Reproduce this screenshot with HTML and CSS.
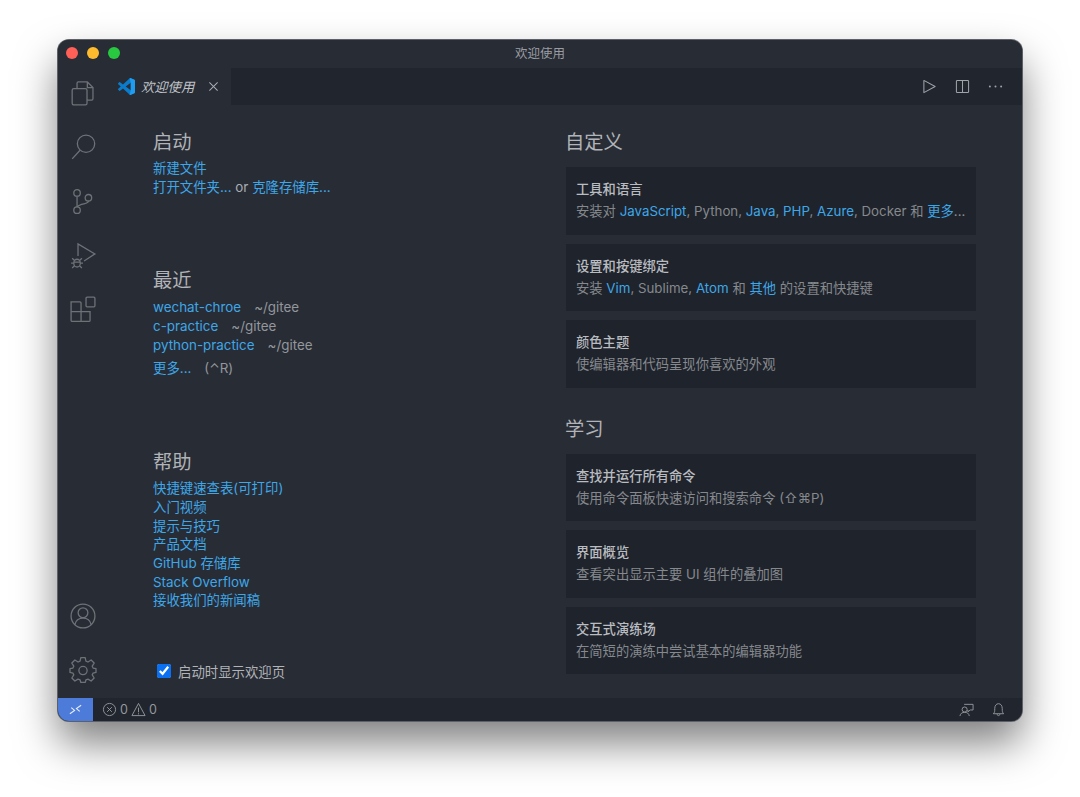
FILE: index.html
```html
<!DOCTYPE html>
<html lang="zh-CN">
<head>
    <meta charset="UTF-8">
    <meta name="viewport" content="width=device-width, initial-scale=1.0">
    <title>欢迎使用</title>
    <link rel="stylesheet" href="styles.css">
</head>
<body>
    <div class="window">
        <div class="titlebar">
            <div class="lights">
                <span class="light red"></span>
                <span class="light yellow"></span>
                <span class="light green"></span>
            </div>
            <div class="window-title">欢迎使用</div>
        </div>
        <div class="main">
            <div class="activitybar">
                <div class="activity-top">
                    <svg class="activity-icon" viewBox="0 0 24 24" fill="none" stroke="currentColor" stroke-width="1.2">
                        <path d="M6.500 8V3A1.200 1.200 0 0 1 7.700 1.800H16L21.200 7V17.300A1.200 1.200 0 0 1 20 18.500H15.700"/>
                        <path d="M16 1.800V7H21.200"/>
                        <rect x="2" y="8" width="13.700" height="15" rx="1.500"/>
                    </svg>
                    <svg class="activity-icon" viewBox="0 0 24 24" fill="none" stroke="currentColor" stroke-width="1.2">
                        <circle cx="14.800" cy="9" r="8"/>
                        <path d="M9.300 15L2 23"/>
                    </svg>
                    <svg class="activity-icon" viewBox="0 0 24 24" fill="none" stroke="currentColor" stroke-width="1.2">
                        <circle cx="6.500" cy="4.500" r="3"/>
                        <circle cx="6.500" cy="20.500" r="3"/>
                        <circle cx="17" cy="9" r="3"/>
                        <path d="M6.500 7.500V17.500"/>
                        <path d="M17 12C17 15.500 9.500 13.500 6.500 17.500"/>
                    </svg>
                    <svg class="activity-icon" viewBox="0 0 24 24" fill="none" stroke="currentColor" stroke-width="1.2">
                        <path d="M7.400 13V1.800L23 11L13 17.500"/>
                        <ellipse cx="6.500" cy="19.500" rx="3" ry="3.600"/>
                        <path d="M3.500 18.500H9.500M2 15L4.200 17M11 15L8.800 17M1 19.500H3.500M9.500 19.500H12M2 24L4.200 22M11 24L8.800 22"/>
                    </svg>
                    <svg class="activity-icon" viewBox="0 0 24 24" fill="none" stroke="currentColor" stroke-width="1.2">
                        <rect x="14.800" y="1" width="8.200" height="9" rx="1"/>
                        <path d="M1 5.500H9.200A1 1 0 0 1 10.200 6.500V23.500H2A1 1 0 0 1 1 22.500Z"/>
                        <path d="M1 14.500H18.500V22.500A1 1 0 0 1 17.500 23.500H10.200"/>
                    </svg>
                </div>
                <div class="activity-bottom">
                    <svg class="activity-icon" viewBox="0 0 24 24" fill="none" stroke="currentColor" stroke-width="1.2">
                        <circle cx="12" cy="12" r="11"/>
                        <circle cx="12" cy="9" r="4.500"/>
                        <path d="M4.500 20C5.500 15.500 8.500 14 12 14S18.500 15.500 19.500 20"/>
                    </svg>
                    <svg class="activity-icon" viewBox="0 0 24 24" fill="none" stroke="currentColor" stroke-width="1.2">
                        <path d="M10 .5H14L14.700 3.800L16.600 4.600L19.500 2.800L22.300 5.600L20.500 8.500L21.300 10.200L24 10.800V14.200L21.300 14.800L20.500 16.500L22.300 19.400L19.500 22.200L16.600 20.400L14.700 21.200L14 23.500H10L9.300 21.200L7.400 20.400L4.500 22.200L1.700 19.400L3.500 16.500L2.700 14.800L0 14.200V10.800L2.700 10.200L3.500 8.500L1.700 5.600L4.500 2.800L7.400 4.600L9.300 3.800Z" stroke-linejoin="round"/>
                        <circle cx="12" cy="12.500" r="3.800"/>
                    </svg>
                </div>
            </div>
            <div class="editor">
                <div class="tabbar">
                    <div class="tab">
                        <svg class="tab-logo" viewBox="0 0 24 24">
                            <path fill="#0b7ccc" d="M23.150 2.587L18.210.21a1.494 1.494 0 0 0-1.705.29l-9.460 8.630-4.120-3.128a.999.999 0 0 0-1.276.057L.327 7.261A1 1 0 0 0 .326 8.740L3.899 12 .326 15.260a1 1 0 0 0 .001 1.479L1.650 17.940a.999.999 0 0 0 1.276.057l4.120-3.128 9.460 8.630a1.492 1.492 0 0 0 1.704.29l4.942-2.377A1.500 1.500 0 0 0 24 20.060V3.939a1.500 1.500 0 0 0-.85-1.352zm-5.146 14.861L10.826 12l7.178-5.448v10.896z"/>
                            <path fill="#1f9cf0" d="M16.505.5a1.494 1.494 0 0 1 1.705-.29l4.940 2.377A1.500 1.500 0 0 1 24 3.939V20.060a1.500 1.500 0 0 1-.85 1.352l-4.942 2.377a1.492 1.492 0 0 1-1.704-.29L18.004 17.448V6.552z"/>
                        </svg>
                        <span class="tab-label">欢迎使用</span>
                        <svg class="tab-close" viewBox="0 0 12 12" fill="none" stroke="currentColor" stroke-width="1.1">
                            <path d="M1.500 1.500L10.500 10.500M10.500 1.500L1.500 10.500"/>
                        </svg>
                    </div>
                    <div class="tab-actions">
                        <svg class="action-icon" viewBox="0 0 16 16" fill="none" stroke="currentColor" stroke-width="1.1">
                            <path d="M2 1.500L14 8L2 14.500Z" stroke-linejoin="round"/>
                        </svg>
                        <svg class="action-icon" viewBox="0 0 16 16" fill="none" stroke="currentColor" stroke-width="1.1">
                            <rect x="1.500" y="1.500" width="13" height="13" rx="1"/>
                            <path d="M8 1.500V14.500"/>
                        </svg>
                        <svg class="action-icon" viewBox="0 0 16 16" fill="currentColor">
                            <circle cx="2" cy="8" r="1.050"/>
                            <circle cx="8" cy="8" r="1.050"/>
                            <circle cx="14" cy="8" r="1.050"/>
                        </svg>
                    </div>
                </div>
                <div class="welcome">
                    <div class="col-left">
                        <div class="section start-section">
                            <h2>启动</h2>
                            <div class="line"><a>新建文件</a></div>
                            <div class="line"><a>打开文件夹...</a> or <a>克隆存储库...</a></div>
                        </div>
                        <div class="section recent-section">
                            <h2>最近</h2>
                            <div class="line"><a>wechat-chroe</a><span class="path">~/gitee</span></div>
                            <div class="line"><a>c-practice</a><span class="path">~/gitee</span></div>
                            <div class="line"><a>python-practice</a><span class="path">~/gitee</span></div>
                            <div class="line more-line"><a>更多...</a><span class="path">(⌃R)</span></div>
                        </div>
                        <div class="section help-section">
                            <h2>帮助</h2>
                            <div class="line"><a>快捷键速查表(可打印)</a></div>
                            <div class="line"><a>入门视频</a></div>
                            <div class="line"><a>提示与技巧</a></div>
                            <div class="line"><a>产品文档</a></div>
                            <div class="line"><a>GitHub 存储库</a></div>
                            <div class="line"><a>Stack Overflow</a></div>
                            <div class="line"><a>接收我们的新闻稿</a></div>
                        </div>
                        <label class="startup">
                            <input type="checkbox" checked>
                            <span>启动时显示欢迎页</span>
                        </label>
                    </div>
                    <div class="col-right">
                        <h2>自定义</h2>
                        <div class="card">
                            <div class="card-title">工具和语言</div>
                            <div class="card-description">安装对 <a>JavaScript</a>, Python, <a>Java</a>, <a>PHP</a>, <a>Azure</a>, Docker 和 <a>更多</a>...</div>
                        </div>
                        <div class="card">
                            <div class="card-title">设置和按键绑定</div>
                            <div class="card-description">安装 <a>Vim</a>, Sublime, <a>Atom</a> 和 <a>其他</a> 的设置和快捷键</div>
                        </div>
                        <div class="card">
                            <div class="card-title">颜色主题</div>
                            <div class="card-description">使编辑器和代码呈现你喜欢的外观</div>
                        </div>
                        <h2 class="learn-heading">学习</h2>
                        <div class="card">
                            <div class="card-title">查找并运行所有命令</div>
                            <div class="card-description">使用命令面板快速访问和搜索命令 (⇧⌘P)</div>
                        </div>
                        <div class="card">
                            <div class="card-title">界面概览</div>
                            <div class="card-description">查看突出显示主要 UI 组件的叠加图</div>
                        </div>
                        <div class="card">
                            <div class="card-title">交互式演练场</div>
                            <div class="card-description">在简短的演练中尝试基本的编辑器功能</div>
                        </div>
                    </div>
                </div>
            </div>
        </div>
        <div class="statusbar">
            <div class="remote">
                <svg viewBox="0 0 16 16" fill="none" stroke="#e6edf8" stroke-width="1.200">
                    <path d="M2 12.500L7 9L3.500 6M14 3.500L9 7L12.500 10"/>
                </svg>
            </div>
            <div class="status-items">
                <svg class="status-icon" viewBox="0 0 16 16" fill="none" stroke="currentColor" stroke-width="1">
                    <circle cx="8" cy="8" r="6.500"/>
                    <path d="M5.500 5.500L10.500 10.500M10.500 5.500L5.500 10.500"/>
                </svg>
                <span>0</span>
                <svg class="status-icon" viewBox="0 0 16 16" fill="none" stroke="currentColor" stroke-width="1">
                    <path d="M8 1.500L15 14.500H1Z" stroke-linejoin="round"/>
                    <path d="M8 6V11M8 12V13.200"/>
                </svg>
                <span>0</span>
            </div>
            <div class="status-right">
                <svg class="status-icon" viewBox="0 0 16 16" fill="none" stroke="currentColor" stroke-width="1">
                    <path d="M5.500 2.500H15V8.500H12L9.500 10.500V8.500"/>
                    <circle cx="6" cy="8" r="2.700"/>
                    <path d="M1 15C1.500 12 3.500 11 6 11S10.500 12 11 15"/>
                </svg>
                <svg class="status-icon" viewBox="0 0 16 16" fill="none" stroke="currentColor" stroke-width="1">
                    <path d="M2.500 12.500C4 11 4 10 4 7C4 4 5.500 1.800 8 1.800S12 4 12 7C12 10 12 11 13.500 12.500Z" stroke-linejoin="round"/>
                    <path d="M6.500 13C6.500 15 9.500 15 9.500 13"/>
                </svg>
            </div>
        </div>
    </div>
</body>
</html>
```

FILE: styles.css
```css
body {
    margin: 0;
    padding: 40px 58px 0;
    height: 797px;
    box-sizing: border-box;
    overflow: hidden;
    background-color: #fff;
    font-family: Inter, "Noto Sans CJK SC", sans-serif;
    font-size: 13.3px;
    color: #a9adb3;
}
.window {
    width: 964px;
    height: 681px;
    border-radius: 11px;
    overflow: hidden;
    background-color: #282c35;
    box-shadow: 0 0 0 1px #5d6066, 0 22px 42px rgba(0, 0, 0, 0.5);
    display: flex;
    flex-direction: column;
}
.titlebar {
    height: 28px;
    flex: none;
    box-sizing: border-box;
    padding-bottom: 2px;
    display: flex;
    align-items: center;
    position: relative;
    background-color: #282c35;
}
.lights {
    display: flex;
    gap: 8.600px;
    padding-left: 7.500px;
}
.light {
    width: 12.500px;
    height: 12.500px;
    border-radius: 50%;
}
.light.red {
    background-color: #fe5f57;
}
.light.yellow {
    background-color: #febb2e;
}
.light.green {
    background-color: #28c840;
}
.window-title {
    position: absolute;
    left: 0;
    right: 0;
    margin-top: -2px;
    text-align: center;
    font-size: 12.500px;
    color: #9a9da3;
}
.main {
    flex: 1;
    display: flex;
    min-height: 0;
}
.activitybar {
    width: 50px;
    flex: none;
    display: flex;
    flex-direction: column;
    justify-content: space-between;
    align-items: center;
    padding: 12px 0 15px;
    box-sizing: border-box;
}
.activity-top {
    display: flex;
    flex-direction: column;
    gap: 28px;
}
.activity-bottom {
    display: flex;
    flex-direction: column;
    gap: 28px;
}
.activity-icon {
    width: 26px;
    height: 26px;
    display: block;
    overflow: visible;
    color: #6e7277;
}
.editor {
    flex: 1;
    min-width: 0;
    display: flex;
    flex-direction: column;
}
.tabbar {
    height: 37px;
    flex: none;
    display: flex;
    justify-content: space-between;
    background-color: #21252d;
}
.tab {
    width: 123px;
    display: flex;
    align-items: center;
    padding-left: 10px;
    box-sizing: border-box;
    background-color: #282c35;
}
.tab-logo {
    width: 17px;
    height: 17px;
}
.tab-label {
    margin-left: 6px;
    font-style: italic;
    color: #bfc2c6;
}
.tab-close {
    width: 11px;
    height: 11px;
    margin-left: 14px;
    color: #a9adb3;
}
.tab-actions {
    display: flex;
    align-items: center;
    gap: 18px;
    padding-right: 19px;
}
.action-icon {
    width: 15px;
    height: 15px;
    color: #a0a4a9;
}
.welcome {
    flex: 1;
    display: flex;
    min-height: 0;
    padding-left: 45px;
}
.col-left {
    width: 413px;
    flex: none;
    display: flex;
    flex-direction: column;
}
.col-right {
    width: 409.500px;
    flex: none;
}
h2 {
    margin: 0;
    font-size: 19.300px;
    line-height: 26px;
    font-weight: 400;
    color: #b0b3b7;
}
.section h2 {
    margin-bottom: 5px;
}
.start-section {
    padding-top: 24px;
}
.start-section h2 {
    margin-bottom: 4px;
}
.recent-section {
    padding-top: 71px;
}
.help-section {
    padding-top: 72px;
}
.help-section h2 {
    margin-bottom: 4px;
}
.line {
    font-size: 13.400px;
    line-height: 18.700px;
    white-space: nowrap;
}
.more-line {
    margin-top: 4px;
}
a {
    color: #3ea7e8;
}
.path {
    margin-left: 13px;
    color: #93979c;
}
.startup {
    display: flex;
    align-items: center;
    gap: 7px;
    margin-top: 51px;
    padding-left: 4px;
    font-size: 13.400px;
    color: #b0b3b7;
}
.startup input {
    width: 14px;
    height: 14px;
    margin: 0;
    accent-color: #0b6ff2;
}
.col-right h2 {
    margin-left: -1px;
}
.col-right > h2:first-child {
    padding-top: 24px;
    margin-bottom: 12px;
}
.col-right .learn-heading {
    margin-top: 28px;
    margin-bottom: 12px;
}
.card {
    height: 67.500px;
    box-sizing: border-box;
    margin-bottom: 9px;
    padding: 12px 10px;
    background-color: #1f232b;
    white-space: nowrap;
}
.card-title {
    line-height: 20px;
    font-weight: 500;
    color: #b9bcc0;
}
.card-description {
    margin-top: 2px;
    line-height: 20px;
    color: #85898e;
}
.statusbar {
    height: 23px;
    flex: none;
    display: flex;
    align-items: center;
    background-color: #21252d;
    font-size: 12.500px;
    color: #94989d;
}
.remote {
    width: 35px;
    height: 100%;
    display: flex;
    align-items: center;
    justify-content: center;
    background-color: #4c7bd9;
}
.remote svg {
    width: 15px;
    height: 15px;
}
.status-items {
    display: flex;
    align-items: center;
    gap: 3px;
    padding-left: 9px;
}
.status-icon {
    width: 15px;
    height: 15px;
}
.status-right {
    margin-left: auto;
    display: flex;
    gap: 17px;
    padding-right: 16px;
}
```
